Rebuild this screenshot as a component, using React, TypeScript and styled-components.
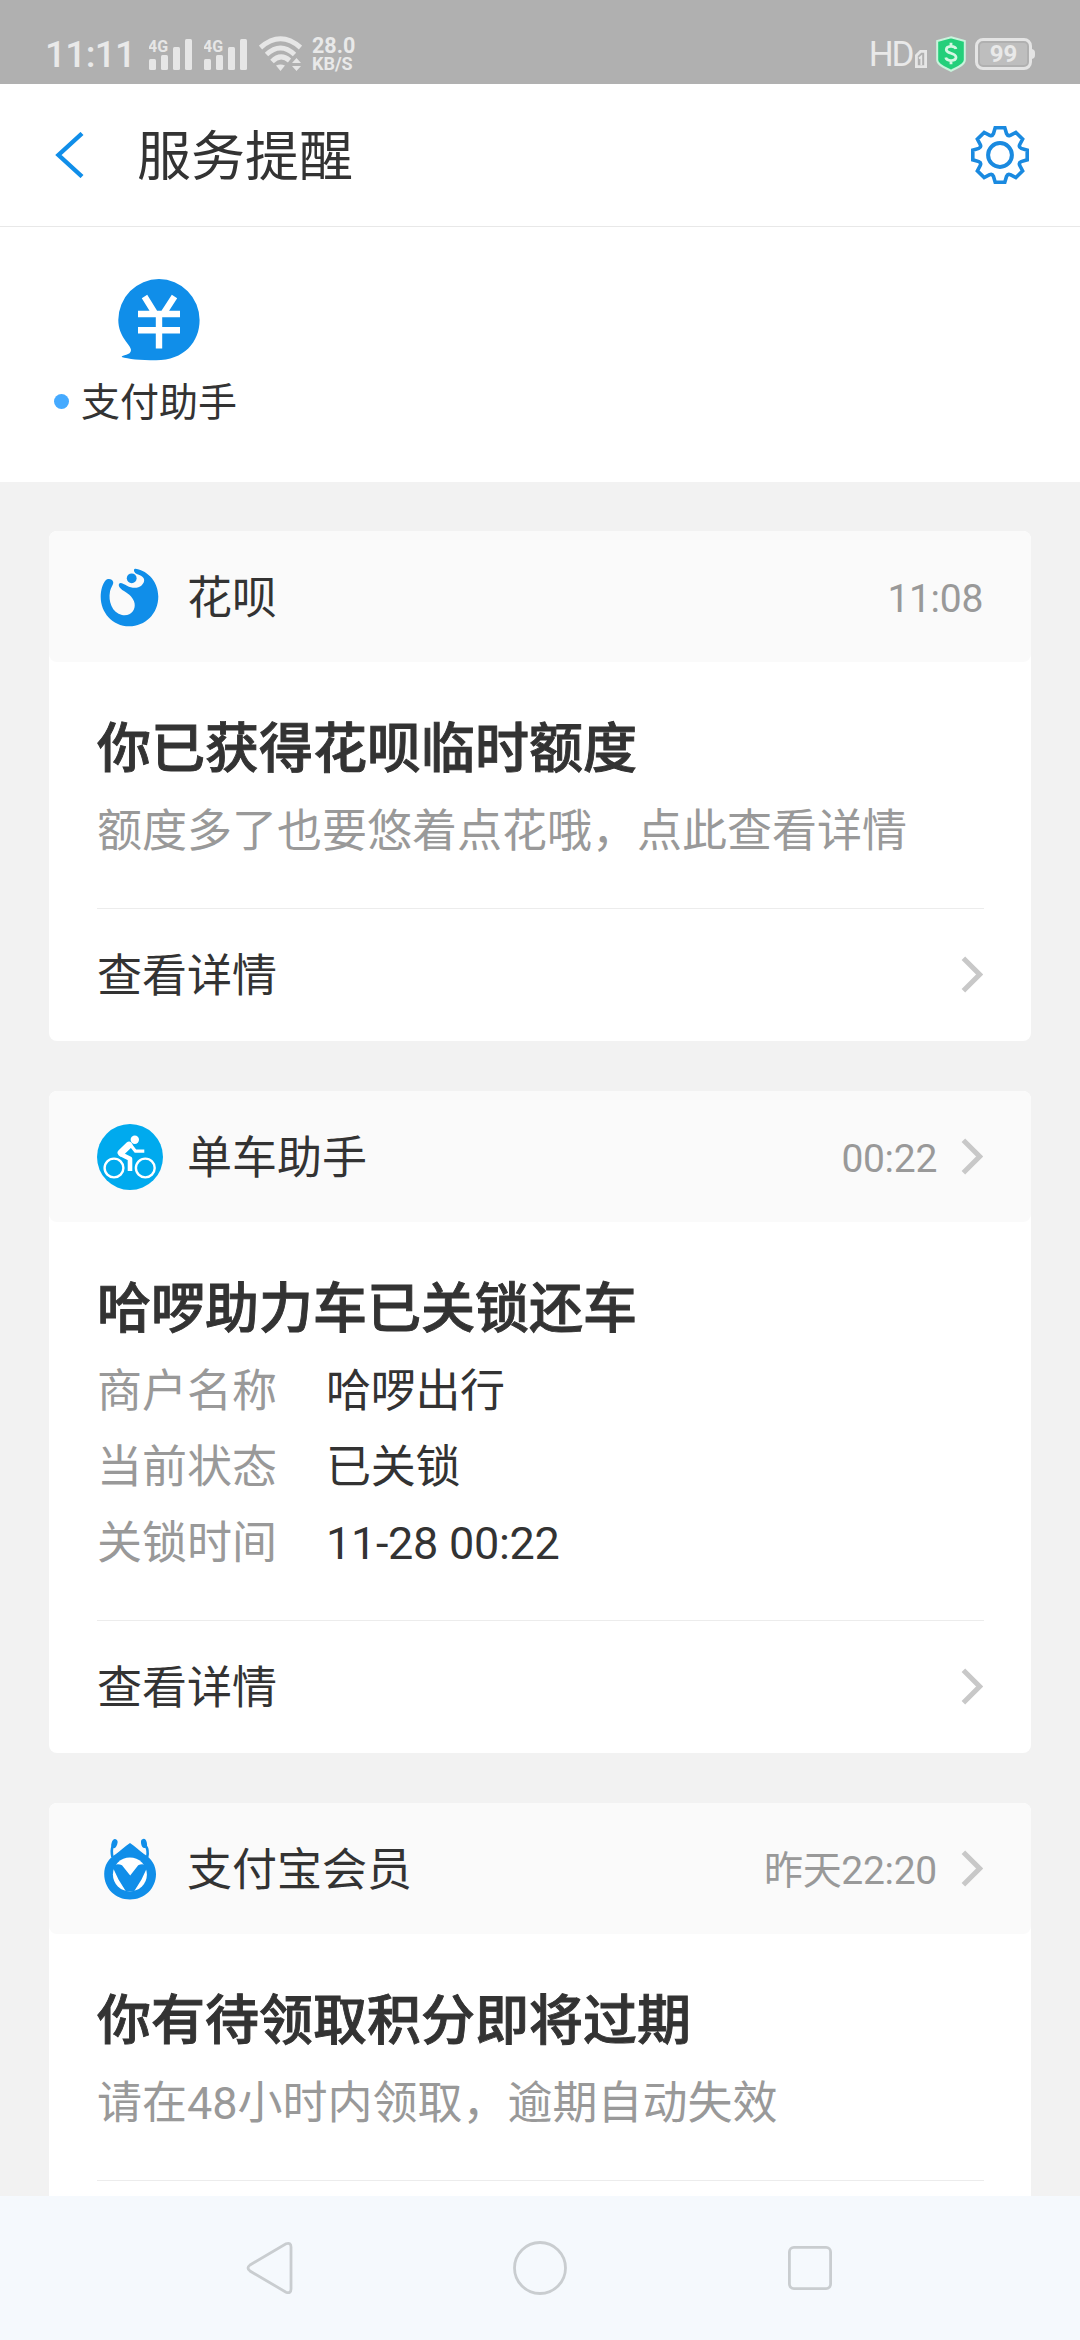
import React from "react";
import styled, { createGlobalStyle } from "styled-components";

const GlobalStyle = createGlobalStyle`
  * { box-sizing: border-box; }
  body {
    margin: 0;
    background: #f2f2f2;
    color: #333;
    font-family: Roboto, "Noto Sans CJK SC", sans-serif;
  }
  svg { display: block; flex: none; }
`;

const Screen = styled.div`
  width: 1080px;
  height: 2340px;
  display: flex;
  flex-direction: column;
  overflow: hidden;
`;

const StatusBar = styled.header`
  flex: none;
  height: 84px;
  padding: 24px 45px 0 45px;
  display: flex;
  justify-content: space-between;
  background: #b0b0b0;
  color: #e9e9e9;
`;

const StatusGroup = styled.div`
  display: flex;
  align-items: center;
  height: 60px;
`;

const Clock = styled.span`
  width: 104px;
  font-size: 37px;
  font-weight: 500;
  line-height: 60px;
  letter-spacing: -0.7px;
  padding-top: 2px;
`;

const SignalWrap = styled.span`
  margin-right: 11px;
`;

const Speed = styled.div`
  margin-left: 10px;
  display: flex;
  flex-direction: column;
  font-weight: 700;
  span:first-child { font-size: 21.5px; line-height: 18px; }
  span:last-child { font-size: 18px; line-height: 17px; }
`;

const HdLabel = styled.span`
  font-size: 35px;
  line-height: 60px;
  letter-spacing: -2.4px;
  margin-right: 3px;
  padding-top: 2px;
`;

const Battery = styled.div`
  position: relative;
  margin-left: 9px;
  margin-right: 3px;
  width: 57px;
  height: 32px;
  border: 3px solid #e4e4e4;
  border-radius: 8px;
  background: #bebebe;
  background-clip: content-box;
  padding: 2px;
  text-align: center;
  font-size: 24px;
  font-weight: 700;
  line-height: 23px;
  &::after {
    content: "";
    position: absolute;
    right: -6px;
    top: 8px;
    width: 4px;
    height: 10px;
    border-radius: 0 4px 4px 0;
    background: #e4e4e4;
  }
`;

const TitleBar = styled.div`
  flex: none;
  height: 143px;
  padding: 0 50px 0 54px;
  display: flex;
  align-items: center;
  background: #fff;
  border-bottom: 1px solid #e8e8e8;
`;

const PageTitle = styled.h1`
  flex: 1;
  margin: 0 0 0 53px;
  font-size: 54px;
  font-weight: 400;
  line-height: 80px;
  padding-top: 5px;
`;

const Contacts = styled.section`
  flex: none;
  height: 255px;
  padding: 52px 0 0 54px;
  background: #fff;
`;

const Contact = styled.div`
  width: 184px;
  display: flex;
  flex-direction: column;
`;

const ContactIcon = styled.div`
  padding-left: 64px;
`;

const ContactName = styled.div`
  display: flex;
  align-items: center;
  gap: 12px;
  margin-top: 9px;
  font-size: 39px;
  line-height: 60px;
  white-space: nowrap;
  span { padding-top: 3px; }
`;

const UnreadDot = styled.i`
  width: 15px;
  height: 15px;
  border-radius: 50%;
  background: #45aaff;
`;

const Feed = styled.main`
  flex: 1;
  min-height: 0;
  overflow: hidden;
  padding: 49px 49px 0;
  display: flex;
  flex-direction: column;
  gap: 50px;
`;

const CardBox = styled.article`
  flex: none;
  border-radius: 8px;
  background: #fff;
  overflow: hidden;
`;

const CardHead = styled.div`
  height: 131px;
  padding: 0 48px;
  display: flex;
  align-items: center;
  background: #fafafa;
  border-radius: 8px;
`;

const Sender = styled.span`
  flex: 1;
  margin-left: 24px;
  font-size: 45px;
  line-height: 66px;
  padding-top: 4px;
`;

const Time = styled.span`
  font-size: 39px;
  line-height: 60px;
  color: #999;
  padding-top: 4px;
  letter-spacing: -0.3px;
`;

const HeadArrow = styled.span`
  margin-left: 24px;
`;

const CardBody = styled.div`
  margin: 0 47px 0 48px;
  padding: 49px 0 38px;
  border-bottom: 1px solid #ececec;
`;

const CardTitle = styled.h2`
  margin: 0 0 7px;
  padding-top: 1px;
  font-size: 54px;
  line-height: 75px;
  font-weight: 500;
  -webkit-text-stroke: 0.9px #333;
`;

const Description = styled.p`
  margin: 0;
  font-size: 45px;
  line-height: 76px;
  color: #999;
`;

const Detail = styled.div`
  display: grid;
  grid-template-columns: 180px 1fr;
  column-gap: 49px;
  font-size: 45px;
  line-height: 76px;
  span:first-child { color: #999; }
  span:last-child { letter-spacing: -0.3px; }
`;

const CardLink = styled.div`
  height: 132px;
  padding: 0 48px;
  display: flex;
  align-items: center;
  justify-content: space-between;
  font-size: 45px;
  line-height: 66px;
  span { padding-top: 3px; }
`;

const NavBar = styled.nav`
  flex: none;
  height: 144px;
  padding: 0 135px;
  display: grid;
  grid-template-columns: repeat(3, 1fr);
  align-items: center;
  justify-items: center;
  background: #f5f9fd;
`;

const Signal = () => (
  <SignalWrap>
    <svg width="44" height="36" viewBox="0 0 44 36" fill="#e6e6e6">
      <text x="-1" y="15.5" fontFamily="Roboto, sans-serif" fontSize="16" fontWeight="700">4G</text>
      <rect x="0" y="23" width="7" height="11" rx="1.5" />
      <rect x="12" y="19" width="7" height="15" rx="1.5" />
      <rect x="24" y="11" width="7" height="23" rx="1.5" />
      <rect x="36" y="3" width="7" height="31" rx="1.5" />
    </svg>
  </SignalWrap>
);

const Wifi = () => (
  <svg width="43" height="36" viewBox="0 0 43 36" fill="none" stroke="#e6e6e6">
    <path d="M1.5 11.5 Q21.5 -6 41.5 11.5" strokeWidth="5" />
    <path d="M7.5 18.5 Q21.5 5.5 35.5 18.5" strokeWidth="5" />
    <path d="M13 25.5 Q21.5 17 30.5 24.5" strokeWidth="5" />
    <path d="M17 29.5 Q21.5 27.5 26 29.5 L21.5 35Z M33 27 l4.5 -5 l4.5 5Z M33 30 l4.5 5 l4.5 -5Z" fill="#e6e6e6" stroke="none" />
  </svg>
);

const Sim = () => (
  <svg width="12" height="34" viewBox="0 0 12 34" fill="none" stroke="#e6e6e6">
    <path d="M1.4 18.5 L5.5 14.4 H10.6 V29.6 H1.4Z" strokeWidth="2.8" />
    <path d="M4 21.5 L6.3 19.5 V28" strokeWidth="1.8" />
  </svg>
);

const Shield = () => (
  <svg width="30" height="36" viewBox="0 0 30 36">
    <path d="M15 1.2 L28.8 5 V24 C28.8 29 20 32 15 34.8 C10 32 1.2 29 1.2 24 V5Z" fill="#24cf7a" stroke="#c9f3dc" strokeWidth="2" />
    <path d="M20 13 C19 9.3 10.3 9.3 10.3 13.7 C10.3 18 20 16.5 20 21.3 C20 25.6 10.5 25.6 9.8 21.6 M15 6.8 V10.5 M15 24.5 V28.2" fill="none" stroke="#d4f7e3" strokeWidth="2.8" />
  </svg>
);

const Gap = styled.span`
  width: 9px;
`;

const Back = () => (
  <svg width="30" height="46" viewBox="0 0 30 46" fill="none" stroke="#108ee9" strokeWidth="4.4">
    <path d="M28 1.5 L4.5 23 L28 44.5" />
  </svg>
);

const gearPath = (() => {
  const point = (x: number, y: number, turn: number) => {
    const a = (turn * Math.PI) / 4;
    const px = x * Math.cos(a) - y * Math.sin(a) + 30;
    const py = x * Math.sin(a) + y * Math.cos(a) + 30;
    return `${px.toFixed(2)} ${py.toFixed(2)}`;
  };
  let d = "";
  for (let k = 0; k < 8; k++) {
    d += `${k ? "L" : "M"}${point(-4.8, -27.2, k)}L${point(4.8, -27.2, k)}L${point(6.6, -21.2, k)}`;
    d += `Q${point(7.7, -18.6, k)} ${point(-6.6, -21.2, k + 1)}`;
  }
  return d + "Z";
})();

const Gear = () => (
  <svg width="60" height="60" viewBox="0 0 60 60" fill="none" stroke="#1a8ae0">
    <path d={gearPath} strokeWidth="3.6" />
    <circle cx="30" cy="30" r="11.9" strokeWidth="4" />
  </svg>
);

const PayBubble = () => (
  <svg width="82" height="82" viewBox="0 0 82 82">
    <path d="M41 0 A41 41 0 0 1 81.6 41 C81.6 63 66 81.3 38 81.3 C22 81.3 10 80 3.7 78 C3.7 76 13 76.5 13 71 C13 66 0.3 58 0.3 41 A41 41 0 0 1 41 0Z" fill="#108ee9" />
    <path d="M26.5 17.5 L37 34.5 M56.5 17.5 L45.5 34.5 M20 35 H62 M20 51.3 H62 M41 35 V69.5" fill="none" stroke="#fff" strokeWidth="6.4" />
  </svg>
);

const Huabei = () => (
  <svg width="66" height="66" viewBox="0 0 66 66" fill="#108ee9">
    <path d="M38.5 4.8 C52 7 61.3 19 61.3 32.5 C61.3 50 48 62.3 32.3 62.3 C15 62.3 3.7 48 3.7 33 C3.7 26 6 19 8.5 16.5 C11 14 15.5 15 16.2 18 C16.6 20.5 14 23 13 27.5 C11 37 15 49 25 51 C34 52.5 38.6 46 37.6 39.5 C36.8 34 32 30 27 27 C22 24 21 21 22.3 19.5 C23.5 18 27 20 30 21.7 C35 24.5 41 24.5 44.5 21.5 C48.3 18 48 14 44 11.8 C41 10.2 38 9.8 37.2 7.5 C36.8 6 37 4.5 38.5 4.8Z" />
    <circle cx="34.7" cy="14.3" r="4.9" />
  </svg>
);

const Bike = () => (
  <svg width="66" height="66" viewBox="0 0 66 66" fill="none" stroke="#fff">
    <circle cx="33" cy="33" r="33" fill="#00aaee" stroke="none" />
    <circle cx="17" cy="44" r="9.4" strokeWidth="2.4" />
    <circle cx="48.3" cy="44" r="9.4" strokeWidth="2.4" />
    <circle cx="37.8" cy="15.7" r="4.2" fill="#fff" stroke="none" />
    <path d="M32 21 L24 28.8" strokeWidth="6.8" strokeLinecap="round" />
    <path d="M24 30.3 L33 34.8 V47" strokeWidth="4.6" strokeLinejoin="round" />
    <path d="M34 21.5 L38.5 27.2 H47.3" strokeWidth="3.2" />
  </svg>
);

const Member = () => (
  <svg width="66" height="66" viewBox="0 0 66 66" fill="#108ee9">
    <path d="M33 7 C38.5 10.5 42 14.5 47 18 C54.5 22.5 59 29.5 59 38 C59 52.5 47.5 63.5 33 63.5 C18.5 63.5 7.2 52.5 7.2 38 C7.2 29.5 11.5 22.5 19 18 C24 14.5 27.5 10.5 33 7Z" />
    <ellipse cx="17.4" cy="7.6" rx="2.9" ry="4.6" transform="rotate(18 17.4 7.6)" />
    <ellipse cx="47" cy="7.4" rx="2.9" ry="4.6" transform="rotate(-12 47 7.4)" />
    <path d="M15.8 10 Q14 14 15.4 21 M48.8 10 Q51.6 14 50.2 21" fill="none" stroke="#108ee9" strokeWidth="2.6" />
    <circle cx="32.9" cy="38.4" r="17" fill="#fff" />
    <path d="M15 30 Q20.5 27 25 29.3 L33.2 39.5 L41.2 29.3 Q45.5 27 51 30 L49 34 L44.5 43.5 L37 55.5 H29 L21.5 43.5 L17 34Z" />
  </svg>
);

const Arrow = () => (
  <svg width="22" height="38" viewBox="0 0 22 38" fill="none" stroke="#c8c8c8" strokeWidth="5">
    <path d="M2.4 2.2 L18.6 18.5 L2.4 34.8" />
  </svg>
);

interface Notice {
  sender: string;
  icon: React.ReactNode;
  time: string;
  linked: boolean;
  title: string;
  text?: string;
  details?: [string, string][];
  action?: string;
}

const notices: Notice[] = [
  {
    sender: "花呗",
    icon: <Huabei />,
    time: "11:08",
    linked: false,
    title: "你已获得花呗临时额度",
    text: "额度多了也要悠着点花哦，点此查看详情",
    action: "查看详情",
  },
  {
    sender: "单车助手",
    icon: <Bike />,
    time: "00:22",
    linked: true,
    title: "哈啰助力车已关锁还车",
    details: [
      ["商户名称", "哈啰出行"],
      ["当前状态", "已关锁"],
      ["关锁时间", "11-28 00:22"],
    ],
    action: "查看详情",
  },
  {
    sender: "支付宝会员",
    icon: <Member />,
    time: "昨天22:20",
    linked: true,
    title: "你有待领取积分即将过期",
    text: "请在48小时内领取，逾期自动失效",
  },
];

const NoticeCard = ({ notice }: { notice: Notice }) => (
  <CardBox>
    <CardHead>
      {notice.icon}
      <Sender>{notice.sender}</Sender>
      <Time>{notice.time}</Time>
      {notice.linked && <HeadArrow><Arrow /></HeadArrow>}
    </CardHead>
    <CardBody>
      <CardTitle>{notice.title}</CardTitle>
      {notice.text && <Description>{notice.text}</Description>}
      {notice.details?.map(([label, value]) => (
        <Detail key={label}>
          <span>{label}</span>
          <span>{value}</span>
        </Detail>
      ))}
    </CardBody>
    <CardLink>
      {notice.action && (
        <>
          <span>{notice.action}</span>
          <Arrow />
        </>
      )}
    </CardLink>
  </CardBox>
);

export default function App() {
  return (
    <Screen>
      <GlobalStyle />
      <StatusBar>
        <StatusGroup>
          <Clock>11:11</Clock>
          <Signal />
          <Signal />
          <Wifi />
          <Speed>
            <span>28.0</span>
            <span>KB/S</span>
          </Speed>
        </StatusGroup>
        <StatusGroup>
          <HdLabel>HD</HdLabel>
          <Sim />
          <Gap />
          <Shield />
          <Battery>99</Battery>
        </StatusGroup>
      </StatusBar>
      <TitleBar>
        <Back />
        <PageTitle>服务提醒</PageTitle>
        <Gear />
      </TitleBar>
      <Contacts>
        <Contact>
          <ContactIcon><PayBubble /></ContactIcon>
          <ContactName>
            <UnreadDot />
            <span>支付助手</span>
          </ContactName>
        </Contact>
      </Contacts>
      <Feed>
        {notices.map((notice) => (
          <NoticeCard key={notice.sender} notice={notice} />
        ))}
      </Feed>
      <NavBar>
        <svg width="48" height="54" viewBox="0 0 48 54" fill="none" stroke="#c9cdd0" strokeWidth="2.8">
          <path d="M4 24 L40 2.8 Q45 1 45 6 V48 Q45 53 40 51.2 L4 30 Q0 27 4 24Z" />
        </svg>
        <svg width="54" height="54" viewBox="0 0 54 54" fill="none" stroke="#c9cdd0" strokeWidth="2.8">
          <circle cx="27" cy="27" r="25.5" />
        </svg>
        <svg width="44" height="44" viewBox="0 0 44 44" fill="none" stroke="#c9cdd0" strokeWidth="2.8">
          <rect x="1.4" y="1.4" width="41.2" height="41.2" rx="4.5" />
        </svg>
      </NavBar>
    </Screen>
  );
}
